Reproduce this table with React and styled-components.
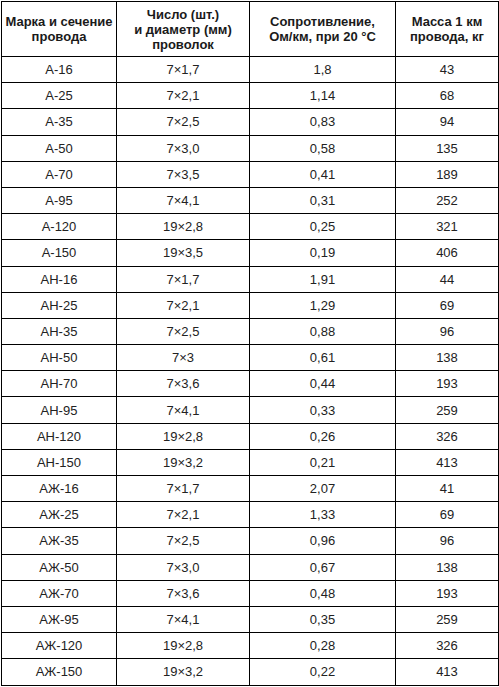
import React from "react";
import styled, { createGlobalStyle } from "styled-components";

const GlobalStyle = createGlobalStyle`
  html, body {
    margin: 0;
    padding: 0;
    background: #ffffff;
  }
  body {
    font-family: "Liberation Sans", Arial, sans-serif;
    color: #1c1c1c;
  }
`;

const rows = [
  ["А-16", "7×1,7", "1,8", "43"],
  ["А-25", "7×2,1", "1,14", "68"],
  ["А-35", "7×2,5", "0,83", "94"],
  ["А-50", "7×3,0", "0,58", "135"],
  ["А-70", "7×3,5", "0,41", "189"],
  ["А-95", "7×4,1", "0,31", "252"],
  ["А-120", "19×2,8", "0,25", "321"],
  ["А-150", "19×3,5", "0,19", "406"],
  ["АН-16", "7×1,7", "1,91", "44"],
  ["АН-25", "7×2,1", "1,29", "69"],
  ["АН-35", "7×2,5", "0,88", "96"],
  ["АН-50", "7×3", "0,61", "138"],
  ["АН-70", "7×3,6", "0,44", "193"],
  ["АН-95", "7×4,1", "0,33", "259"],
  ["АН-120", "19×2,8", "0,26", "326"],
  ["АН-150", "19×3,2", "0,21", "413"],
  ["АЖ-16", "7×1,7", "2,07", "41"],
  ["АЖ-25", "7×2,1", "1,33", "69"],
  ["АЖ-35", "7×2,5", "0,96", "96"],
  ["АЖ-50", "7×3,0", "0,67", "138"],
  ["АЖ-70", "7×3,6", "0,48", "193"],
  ["АЖ-95", "7×4,1", "0,35", "259"],
  ["АЖ-120", "19×2,8", "0,28", "326"],
  ["АЖ-150", "19×3,2", "0,22", "413"],
];

const columns = [115, 133, 146, 103];

const Page = styled.div`
  padding: 1px 0 0 1px;
`;

const Table = styled.table`
  border-collapse: collapse;
  table-layout: fixed;
  width: 497px;
  font-size: 13px;
`;

const HeadCell = styled.th`
  height: 54px;
  padding: 0;
  border: 1px solid #000;
  font-weight: bold;
  line-height: 15px;
  text-align: center;
  vertical-align: middle;
  white-space: nowrap;
  color: #1a1a1a;
`;

const Row = styled.tr`
  height: 26.2px;
`;

const Cell = styled.td`
  padding: 0;
  border: 1px solid #000;
  text-align: center;
  vertical-align: middle;
  line-height: 15px;
  color: #222;
`;

const App = () => {
  return (
    <Page>
      <GlobalStyle />
      <Table>
        <colgroup>
          {columns.map((w, i) => (
            <col key={i} style={{ width: w }} />
          ))}
        </colgroup>
        <thead>
          <tr>
            <HeadCell>
              Марка и сечение
              <br />
              провода
            </HeadCell>
            <HeadCell>
              Число (шт.)
              <br />
              и диаметр (мм)
              <br />
              проволок
            </HeadCell>
            <HeadCell>
              Сопротивление,
              <br />
              Ом/км, при 20 °C
            </HeadCell>
            <HeadCell>
              Масса 1 км
              <br />
              провода, кг
            </HeadCell>
          </tr>
        </thead>
        <tbody>
          {rows.map((r) => (
            <Row key={r[0]}>
              {r.map((v, i) => (
                <Cell key={i}>{v}</Cell>
              ))}
            </Row>
          ))}
        </tbody>
      </Table>
    </Page>
  );
};

export default App;
